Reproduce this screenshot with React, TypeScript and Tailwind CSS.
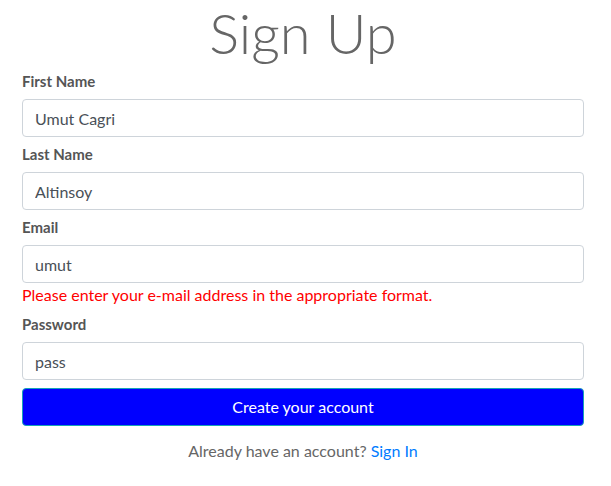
import React from 'react';

const fieldLabel = 'block mt-[5px] mb-[6px] text-[15px] leading-6 font-bold text-[#555]';
const fieldInput =
  'block w-full h-[38px] px-3 rounded border border-[#ced4da] bg-white text-base text-[#495057] outline-none';

const App: React.FC = () => {
  return (
    <div className="min-h-[486px] bg-white pl-[22px] pr-[27px] font-['Lato','Liberation_Sans',sans-serif]">
      <h1 className="h-[64px] text-center text-[56px] leading-[66px] font-light text-[#666]">
        Sign Up
      </h1>

      <form>
        <label className={fieldLabel}>First Name</label>
        <input className={fieldInput} defaultValue="Umut Cagri" />

        <label className={fieldLabel}>Last Name</label>
        <input className={fieldInput} defaultValue="Altinsoy" />

        <label className={fieldLabel}>Email</label>
        <input className={fieldInput} defaultValue="umut" />
        <p className="text-base leading-6 text-[#ff0000]">
          Please enter your e-mail address in the appropriate format.
        </p>

        <label className={fieldLabel}>Password</label>
        <input className={fieldInput} defaultValue="pass" />

        <button
          type="button"
          className="mt-2 block w-full h-[38px] rounded border border-[#17a2b8] bg-[#0000ff] text-base text-white"
        >
          Create your account
        </button>
      </form>

      <p className="mt-[13px] text-center text-base leading-6 text-[#666]">
        Already have an account? <a className="text-[#007bff]">Sign In</a>
      </p>
    </div>
  );
};

export default App;
